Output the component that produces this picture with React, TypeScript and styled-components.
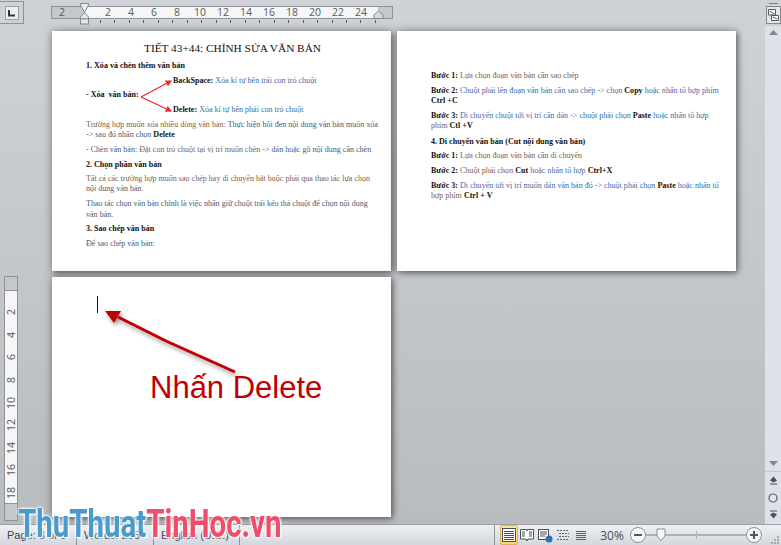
import React from "react";
import styled, { createGlobalStyle } from "styled-components";

const H_NUMBERS = [2, 4, 6, 8, 10, 12, 14, 16, 18, 20, 22, 24];
const V_NUMBERS = [2, 4, 6, 8, 10, 12, 14, 16, 18];

const GlobalStyle = createGlobalStyle`
  html, body {
    margin: 0;
    padding: 0;
    background: #c4c7cb;
  }
`;

const Window = styled.div`
  position: relative;
  width: 781px;
  height: 545px;
  overflow: hidden;
  display: flex;
  flex-direction: column;
  font-family: "Liberation Sans", Arial, sans-serif;
`;

const Main = styled.div`
  flex: 1;
  min-height: 0;
  display: flex;
  background: linear-gradient(#cfd2d6, #b9bcbf);
`;

const LeftRail = styled.div`
  width: 52px;
  display: flex;
  flex-direction: column;
  padding-bottom: 3px;
  box-sizing: border-box;
`;

const TabCorner = styled.div`
  width: 24px;
  height: 23px;
  margin-top: 1px;
  box-sizing: border-box;
  border: 1px solid #8e9296;
  border-left: none;
  display: flex;
  align-items: center;
  justify-content: center;
`;

const TabInner = styled.div`
  width: 14px;
  height: 14px;
  box-sizing: border-box;
  background: #eceef1;
  border: 1px solid #9a9ea3;
  display: flex;
  align-items: center;
  justify-content: center;
`;

const VRuler = styled.div`
  width: 14px;
  margin: auto 0 0 4px;
  box-sizing: border-box;
  border: 1px solid #8e9296;
  display: flex;
  flex-direction: column;
  height: 245px;
  background: #c4c7cb;
`;

const VRulerWhite = styled.div`
  margin-top: 13px;
  height: 214px;
  background: #f6f6f6;
  border-top: 1px solid #8e9296;
  border-bottom: 1px solid #8e9296;
  box-sizing: border-box;
  padding-top: 10px;
`;

const VNumber = styled.div`
  height: 22.6px;
  display: flex;
  align-items: center;
  justify-content: center;
  font-family: "Open Sans", sans-serif;
  font-size: 10.5px;
  color: #555b62;
  span {
    display: block;
    transform: rotate(-90deg);
  }
`;

const Workspace = styled.div`
  flex: 1;
  min-width: 0;
  display: flex;
  flex-direction: column;
`;

const RulerRow = styled.div`
  position: relative;
  height: 31px;
  padding-top: 6px;
  box-sizing: border-box;
  margin-left: -1px;
`;

const RulerTrack = styled.div`
  width: 342px;
  height: 13px;
  box-sizing: border-box;
  border: 1px solid #8e9296;
  background: #c4c7cb;
  display: flex;
  color: #555b62;
  font-family: "Open Sans", sans-serif;
  font-size: 10.5px;
  line-height: 11px;
`;

const RulerMargin = styled.div`
  width: 20px;
  text-align: center;
`;

const RulerWhite = styled.div`
  width: 293px;
  margin-left: 13px;
  background: #f6f6f6;
  display: flex;
  padding-left: 11.5px;
  box-sizing: border-box;
`;

const RulerNumber = styled.div`
  width: 23px;
  flex: none;
  text-align: center;
`;

const Ticks = styled.div`
  margin: 1px 0 0 49px;
  width: 277px;
  height: 3px;
  background: repeating-linear-gradient(
    to right,
    #55595e 0,
    #55595e 1px,
    transparent 1px,
    transparent 14.47px
  );
`;

const Marker = styled.svg<{ $left: number }>`
  position: absolute;
  top: 2px;
  left: ${(p) => p.$left}px;
`;

const Pages = styled.div`
  display: grid;
  grid-template-columns: 339px 339px;
  grid-template-rows: 240px 240px;
  gap: 6px;
`;

const Page = styled.div`
  position: relative;
  background: #fff;
  box-shadow: 2px 2px 5px rgba(0, 0, 0, 0.35), 0 0 9px rgba(0, 0, 0, 0.35);
  box-sizing: border-box;
  padding: 10px 12px 0 34px;
  font-family: "Liberation Serif", "Times New Roman", serif;
  font-size: 8.05px;
  line-height: 10.5px;
  color: #4d5a78;
  white-space: nowrap;
`;

const Title = styled.div`
  margin-left: 58px;
  font-size: 11.3px;
  line-height: 14px;
  color: #111;
`;

const Para = styled.div<{ $gap?: number; $indent?: number }>`
  margin-top: ${(p) => p.$gap ?? 4.5}px;
  margin-left: ${(p) => p.$indent ?? 0}px;
`;

const Heading = styled(Para)`
  font-weight: bold;
  color: #111;
`;

const Em = styled.b`
  color: #111;
`;

const Warm = styled.span`
  color: #7a6350;
`;

const Blue = styled.span`
  color: #3f6cab;
`;

const ForkArrows = styled.svg`
  position: absolute;
  left: 34px;
  top: 48px;
`;

const SecondPage = styled(Page)`
  padding-top: 39.75px;
`;

const ThirdPage = styled(Page)`
  padding: 19px 0 0 45px;
`;

const Caret = styled.div`
  width: 1px;
  height: 17px;
  background: #111;
`;

const CalloutArrow = styled.svg`
  position: absolute;
  left: 40px;
  top: 20px;
  filter: drop-shadow(2px 3px 2px rgba(0, 0, 0, 0.4));
`;

const Callout = styled.div`
  position: absolute;
  left: 98px;
  top: 93px;
  font-family: "Liberation Sans", Arial, sans-serif;
  font-size: 31px;
  line-height: 36px;
  color: #c00000;
`;

const Scrollbar = styled.div`
  width: 16px;
  display: flex;
  flex-direction: column;
  align-items: center;
  background: linear-gradient(transparent 26px, #dde1e9 26px);
`;

const Dash = styled.div`
  width: 9px;
  height: 1px;
  margin-top: 3px;
  background: #7d8186;
`;

const RulerToggle = styled.div`
  width: 15px;
  height: 18px;
  margin-top: 2px;
  box-sizing: border-box;
  border: 1px solid #85898e;
  background: #e4e6e9;
  display: flex;
  align-items: center;
  justify-content: center;
`;

const ScrollButton = styled.div<{ $height: number }>`
  height: ${(p) => p.$height}px;
  display: flex;
  align-items: center;
  justify-content: center;
  flex: none;
`;

const ScrollSpacer = styled.div`
  flex: 1;
`;

const ScrollDivider = styled.div`
  width: 100%;
  height: 1px;
  background: #c3c7cf;
`;

const StatusBar = styled.div`
  height: 21px;
  box-sizing: border-box;
  border-top: 1px solid #9b9fa3;
  background: linear-gradient(#eef0f3, #d3d7de);
  display: flex;
  align-items: center;
  font-size: 11px;
  color: #3d4650;
`;

const StatusItem = styled.div<{ $width: number }>`
  width: ${(p) => p.$width}px;
  height: 100%;
  box-sizing: border-box;
  padding-left: 7px;
  border-right: 1px solid #8e9296;
  display: flex;
  align-items: center;
`;

const StatusSpacer = styled.div`
  width: 255px;
  height: 100%;
  border-right: 1px solid #8e9296;
  box-sizing: border-box;
`;

const ViewGroup = styled.div`
  display: flex;
  height: 100%;
  margin-left: 5px;
`;

const ViewButton = styled.div<{ $active?: boolean }>`
  width: 18px;
  height: 100%;
  box-sizing: border-box;
  display: flex;
  align-items: center;
  justify-content: center;
  border-radius: 2px;
  ${(p) =>
    p.$active
      ? "background: linear-gradient(#fde99a, #fbd56a); border: 1px solid #e3b34f;"
      : ""}
`;

const Percent = styled.div`
  width: 40px;
  padding-left: 4px;
  box-sizing: border-box;
  text-align: center;
  font-family: "Open Sans", sans-serif;
  font-size: 12px;
  color: #4a5058;
`;

const RoundButton = styled.div`
  width: 16px;
  height: 16px;
  box-sizing: border-box;
  flex: none;
  border-radius: 50%;
  border: 1px solid #8b9097;
  background: #f6f7f9;
  display: flex;
  align-items: center;
  justify-content: center;
  z-index: 1;
`;

const Slider = styled.div`
  position: relative;
  width: 100px;
  height: 2px;
  background: #aeb3bb;
`;

const SliderTick = styled.div`
  position: absolute;
  left: 50px;
  top: -3px;
  width: 1px;
  height: 8px;
  background: #aeb3bb;
`;

const SliderThumb = styled.svg`
  position: absolute;
  left: 10px;
  top: -6px;
`;

const Grip = styled.svg`
  margin: 8px 0 0 9px;
`;

const Watermark = styled.div`
  position: absolute;
  left: 18px;
  top: 501px;
  font-family: Roboto, "Liberation Sans", sans-serif;
  font-weight: 700;
  font-size: 38px;
  line-height: 46px;
  white-space: nowrap;
  transform-origin: left center;
  transform: scaleX(0.775);
  text-shadow: 0 0 2px #fff, 0 0 3px #fff, 0 0 4px #fff, 1px 1px 2px #fff;
`;

const WaterBlue = styled.span`
  color: #4a9bcd;
`;

const WaterRed = styled.span`
  color: #ee4e6c;
`;

const Lines = ({ count, stroke = "#4b5057" }: { count: number; stroke?: string }) => (
  <>
    {Array.from({ length: count }, (_, i) => (
      <line key={i} x1="2" x2="12" y1={3.5 + i * 2} y2={3.5 + i * 2} stroke={stroke} />
    ))}
  </>
);

const Triangle = ({ down }: { down?: boolean }) => (
  <svg width="9" height="5">
    <path d={down ? "M0 0H9L4.5 5Z" : "M0 5H9L4.5 0Z"} fill="#7d8a86" />
  </svg>
);

const DoubleArrow = ({ down }: { down?: boolean }) => (
  <svg width="9" height="9">
    {down ? (
      <path d="M1 .5H8V1.5H1ZM4.5 2.5L8 4.5H1ZM1 4.5H8L4.5 8.5Z" fill="#4b5057" />
    ) : (
      <path d="M1 7.5H8V8.5H1ZM4.5 6.5L8 4.5H1ZM1 4.5H8L4.5 .5Z" fill="#4b5057" />
    )}
  </svg>
);

export default function App() {
  return (
    <Window>
      <GlobalStyle />
      <Main>
        <LeftRail>
          <TabCorner>
            <TabInner>
              <svg width="8" height="8">
                <path d="M1 1V6.5H7" fill="none" stroke="#333" strokeWidth="2" />
              </svg>
            </TabInner>
          </TabCorner>
          <VRuler>
            <VRulerWhite>
              {V_NUMBERS.map((n) => (
                <VNumber key={n}>
                  <span>{n}</span>
                </VNumber>
              ))}
            </VRulerWhite>
          </VRuler>
        </LeftRail>

        <Workspace>
          <RulerRow>
            <RulerTrack>
              <RulerMargin>2</RulerMargin>
              <RulerWhite>
                {H_NUMBERS.map((n) => (
                  <RulerNumber key={n}>{n}</RulerNumber>
                ))}
              </RulerWhite>
            </RulerTrack>
            <Ticks />
            <Marker $left={29} width="10" height="23">
              <path
                d="M.5 1.5H8.5V3L4.5 10.5L8.5 15V17H.5V15L4.5 10.5L.5 3Z"
                fill="#e8e9eb"
                stroke="#85898e"
              />
              <rect x=".5" y="17" width="8" height="5" fill="#e8e9eb" stroke="#85898e" />
            </Marker>
            <Marker $left={322} width="12" height="20">
              <path d="M1 16.5V13L5.5 9L10 13V16.5Z" fill="#d8dadd" stroke="#85898e" />
            </Marker>
          </RulerRow>

          <Pages>
            <Page>
              <Title>TIẾT 43+44: CHỈNH SỬA VĂN BẢN</Title>
              <Heading $gap={5.75}>1. Xóa và chèn thêm văn bản</Heading>
              <Para $indent={87}>
                <Em>BackSpace:</Em> <Blue>Xóa kí tự bên trái con trỏ chuột</Blue>
              </Para>
              <Heading $gap={3.5}>- Xóa&nbsp; văn bản:</Heading>
              <Para $indent={87}>
                <Em>Delete:</Em> <Blue>Xóa kí tự bên phải con trỏ chuột</Blue>
              </Para>
              <Para>
                <Warm>Trường hợp muốn xóa nhiều dòng văn bản:</Warm> Thực hiện bôi đen nội dung văn bản muốn xóa
                <br />
                -&gt; sau đó nhấn chọn <Em>Delete</Em>
              </Para>
              <Para $gap={4}>
                - Chèn văn bản: <Warm>Đặt con trỏ chuột tại vị trí muốn chèn</Warm> -&gt; dán hoặc gõ nội dung cần chèn
              </Para>
              <Heading>2. Chọn phần văn bản</Heading>
              <Para $gap={3.5}>
                <Warm>Tất cả các trường hợp muốn sao chép hay di chuyển bắt buộc phải qua thao tác lựa chọn</Warm>
                <br />
                nội dung văn bản.
              </Para>
              <Para>
                Thao tác chọn văn bản chính là việc nhấn giữ chuột trái kéo thả chuột để chọn nội dung
                <br />
                văn bản.
              </Para>
              <Heading $gap={4}>3. Sao chép văn bản</Heading>
              <Para>Để sao chép văn bản:</Para>
              <ForkArrows width="90" height="36" viewBox="0 0 90 36">
                <defs>
                  <marker id="fork" markerWidth="5" markerHeight="5" refX="4" refY="2.5" orient="auto">
                    <path d="M0 0L5 2.5L0 5Z" fill="#f02a2a" />
                  </marker>
                </defs>
                <path d="M55 18L85 2" stroke="#f02a2a" strokeWidth="1.3" fill="none" markerEnd="url(#fork)" />
                <path d="M55 18L85 32" stroke="#f02a2a" strokeWidth="1.3" fill="none" markerEnd="url(#fork)" />
              </ForkArrows>
            </Page>

            <SecondPage>
              <Para $gap={0}>
                <Em>Bước 1:</Em> <Warm>Lựa chọn đoạn văn bản cần sao chép</Warm>
              </Para>
              <Para>
                <Em>Bước 2:</Em> <Blue>Chuột phải lên đoạn văn bản cần sao chép -&gt; chọn</Blue> <Em>Copy</Em>{" "}
                <Blue>hoặc nhấn tổ hợp phím</Blue>
                <br />
                <Em>Ctrl +C</Em>
              </Para>
              <Para $gap={3.75}>
                <Em>Bước 3:</Em> <Blue>Di chuyển chuột tới vị trí cần dán -&gt; chuột phải chọn</Blue> <Em>Paste</Em>{" "}
                <Blue>hoặc nhấn tổ hợp</Blue>
                <br />
                <Warm>phím</Warm> <Em>Ctl +V</Em>
              </Para>
              <Heading $gap={5}>4. Di chuyển văn bản (Cut nội dung văn bản)</Heading>
              <Para $gap={3.5}>
                <Em>Bước 1:</Em> <Warm>Lựa chọn đoạn văn bản cần di chuyển</Warm>
              </Para>
              <Para>
                <Em>Bước 2:</Em> <Warm>Chuột phải chọn</Warm> <Em>Cut</Em> <Blue>hoặc nhấn tổ hợp</Blue>{" "}
                <Em>Ctrl+X</Em>
              </Para>
              <Para>
                <Em>Bước 3:</Em> <Blue>Di chuyển tới vị trí muốn dán văn bản đó -&gt; chuột phải chọn</Blue>{" "}
                <Em>Paste</Em> <Blue>hoặc nhấn tổ</Blue>
                <br />
                <Warm>hợp phím</Warm> <Em>Ctrl + V</Em>
              </Para>
            </SecondPage>

            <ThirdPage>
              <Caret />
              <CalloutArrow width="160" height="90" viewBox="0 0 160 90">
                <path d="M143 75L74 44L26 20" stroke="#c00000" strokeWidth="3" fill="none" />
                <path d="M13 14H29L22 26Z" fill="#c00000" />
              </CalloutArrow>
              <Callout>Nhấn Delete</Callout>
            </ThirdPage>
          </Pages>
        </Workspace>

        <Scrollbar>
          <Dash />
          <RulerToggle>
            <svg width="11" height="12">
              <path d="M.5 .5H7.5V6H.5ZM3.5 6.5H10.5V11.5H3.5Z" fill="#f7f7f7" stroke="#55595e" />
              <path d="M2 2L6 5M5 8L9 10" stroke="#55595e" />
            </svg>
          </RulerToggle>
          <ScrollButton $height={16}>
            <Triangle />
          </ScrollButton>
          <ScrollSpacer />
          <ScrollButton $height={16}>
            <Triangle down />
          </ScrollButton>
          <ScrollDivider />
          <ScrollButton $height={17}>
            <DoubleArrow />
          </ScrollButton>
          <ScrollButton $height={17}>
            <svg width="10" height="10">
              <circle cx="5" cy="5" r="4" fill="none" stroke="#5d6268" strokeWidth="1.2" />
            </svg>
          </ScrollButton>
          <ScrollButton $height={17}>
            <DoubleArrow down />
          </ScrollButton>
          <ScrollButton $height={1} />
        </Scrollbar>
      </Main>

      <StatusBar>
        <StatusItem $width={77}>Page: 3 of 3</StatusItem>
        <StatusItem $width={77}>Words: 255</StatusItem>
        <StatusItem $width={86}>English (U.S.)</StatusItem>
        <StatusSpacer />
        <ViewGroup>
          <ViewButton $active>
            <svg width="14" height="14">
              <rect x=".5" y=".5" width="13" height="13" fill="#fff" stroke="#4b5057" />
              <Lines count={5} />
            </svg>
          </ViewButton>
          <ViewButton>
            <svg width="14" height="14">
              <path d="M.5 1.5H6.5L7 3L7.5 1.5H13.5V11H8L7 13L6 11H.5Z" fill="#fff" stroke="#4b5057" />
              <path d="M2 4H5M2 6H5M2 8H5M9 4H12M9 6H12M9 8H12" stroke="#4b5057" />
            </svg>
          </ViewButton>
          <ViewButton>
            <svg width="15" height="15">
              <rect x=".5" y="1.5" width="10" height="10" fill="#fff" stroke="#4b5057" />
              <path d="M2 4H9M2 6H9M2 8H7" stroke="#4b5057" />
              <circle cx="11" cy="11" r="3.5" fill="#2f6fc0" />
              <path d="M9 12A3 3 0 0 0 13 12L11.5 10Z" fill="#2f8a3e" />
            </svg>
          </ViewButton>
          <ViewButton>
            <svg width="14" height="14">
              <path
                d="M4 2.5H13M1 2.5H3M6 5.5H13M3 5.5H5M6 8.5H13M3 8.5H5M4 11.5H13M1 11.5H3"
                stroke="#5d6268"
                strokeDasharray="2 1"
              />
            </svg>
          </ViewButton>
          <ViewButton>
            <svg width="14" height="14">
              <Lines count={5} stroke="#5d6268" />
            </svg>
          </ViewButton>
        </ViewGroup>
        <Percent>30%</Percent>
        <RoundButton>
          <svg width="10" height="10">
            <path d="M1 5H9" stroke="#555" strokeWidth="2" />
          </svg>
        </RoundButton>
        <Slider>
          <SliderTick />
          <SliderThumb width="10" height="14">
            <path d="M1 1H9V8L5 12.5L1 8Z" fill="#f6f7f9" stroke="#8b9097" />
          </SliderThumb>
        </Slider>
        <RoundButton>
          <svg width="10" height="10">
            <path d="M1 5H9M5 1V9" stroke="#555" strokeWidth="2" />
          </svg>
        </RoundButton>
        <Grip width="9" height="9">
          <path d="M6 1h2v2H6zM3 4h2v2H3zM6 4h2v2H6zM0 7h2v2H0zM3 7h2v2H3zM6 7h2v2H6z" fill="#a4a9b0" />
        </Grip>
      </StatusBar>

      <Watermark>
        <WaterBlue>ThuThuat</WaterBlue>
        <WaterRed>TinHoc.vn</WaterRed>
      </Watermark>
    </Window>
  );
}
